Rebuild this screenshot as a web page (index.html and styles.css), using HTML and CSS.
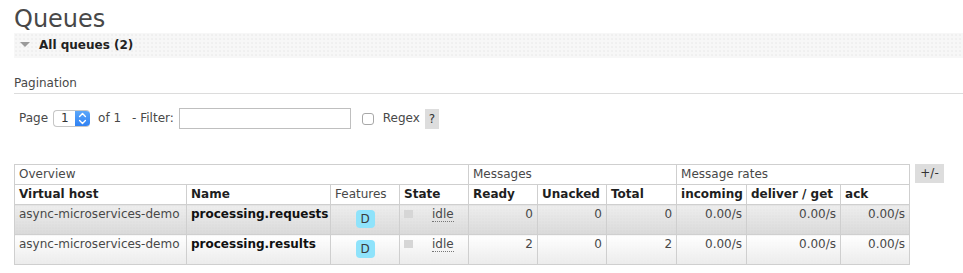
FILE: index.html
```html
<!DOCTYPE html>
<html>
<head>
<meta charset="utf-8">
<title>Queues</title>
<link rel="stylesheet" href="styles.css">
</head>
<body>
<h1 class="title">Queues</h1>
<div class="section">
  <h2 class="section-head"><span class="tri"></span>All queues (2)</h2>
  <div class="section-body">
    <h3 class="pag-title">Pagination</h3>
    <div class="pager">
      <span class="lbl page">Page</span>
      <span class="select"><span class="select-val">1</span><span class="stepper"><svg width="15" height="17" viewBox="0 0 15 17"><path d="M4.6 6.4 L7.5 3.6 L10.4 6.4" fill="none" stroke="#fff" stroke-width="1.4" stroke-linecap="round" stroke-linejoin="round"/><path d="M4.6 10.6 L7.5 13.4 L10.4 10.6" fill="none" stroke="#fff" stroke-width="1.4" stroke-linecap="round" stroke-linejoin="round"/></svg></span></span>
      <span class="lbl of">of 1</span>
      <span class="lbl filt">- Filter:</span>
      <input class="filter" type="text">
      <input class="check" type="checkbox">
      <span class="lbl regex">Regex</span>
      <span class="help">?</span>
    </div>
    <div class="table-wrap">
      <table class="list">
        <colgroup>
          <col class="c-vhost"><col class="c-name"><col class="c-feat"><col class="c-state">
          <col class="c-num"><col class="c-num"><col class="c-num2">
          <col class="c-in"><col class="c-deliver"><col class="c-ack">
        </colgroup>
        <thead>
          <tr class="group">
            <th colspan="4">Overview</th>
            <th colspan="3">Messages</th>
            <th colspan="3">Message rates</th>
          </tr>
          <tr class="cols">
            <th>Virtual host</th>
            <th>Name</th>
            <th class="plain">Features</th>
            <th>State</th>
            <th>Ready</th>
            <th>Unacked</th>
            <th>Total</th>
            <th>incoming</th>
            <th>deliver / get</th>
            <th>ack</th>
          </tr>
        </thead>
        <tbody>
          <tr class="alt1">
            <td>async-microservices-demo</td>
            <td class="qname">processing.requests</td>
            <td class="c"><span class="badge">D</span></td>
            <td><span class="state-sq"></span><abbr class="state">idle</abbr></td>
            <td class="r">0</td>
            <td class="r">0</td>
            <td class="r">0</td>
            <td class="r">0.00/s</td>
            <td class="r">0.00/s</td>
            <td class="r">0.00/s</td>
          </tr>
          <tr class="alt2">
            <td>async-microservices-demo</td>
            <td class="qname">processing.results</td>
            <td class="c"><span class="badge">D</span></td>
            <td><span class="state-sq"></span><abbr class="state">idle</abbr></td>
            <td class="r">2</td>
            <td class="r">0</td>
            <td class="r">2</td>
            <td class="r">0.00/s</td>
            <td class="r">0.00/s</td>
            <td class="r">0.00/s</td>
          </tr>
        </tbody>
      </table>
      <span class="plusminus">+/-</span>
    </div>
  </div>
</div>
</body>
</html>
```
FILE: styles.css
```css
html, body {
  margin: 0;
  padding: 0;
  background: #fff;
}
body {
  font-family: "DejaVu Sans", Verdana, sans-serif;
  font-size: 12px;
  line-height: 15px;
  color: #484848;
  padding-left: 14px;
}
.title {
  margin: 0;
  padding-top: 6px;
  font-size: 24px;
  line-height: 27px;
  font-weight: normal;
  color: #484848;
}
.section-head {
  margin: 0;
  height: 15px;
  padding: 5px 0 5px 6px;
  display: flex;
  align-items: center;
  font-size: 12px;
  line-height: 15px;
  font-weight: bold;
  color: #222;
  background-color: #f7f7f7;
  background-image: radial-gradient(circle, #ececec 0.6px, transparent 0.9px);
  background-size: 4px 4px;
}
.tri {
  width: 0;
  height: 0;
  border-left: 5px solid transparent;
  border-right: 5px solid transparent;
  border-top: 5px solid #9a9a9a;
  margin-right: 9px;
  margin-top: -2px;
}
.pag-title {
  margin: 18px 0 0;
  padding-bottom: 2px;
  font-size: 12px;
  line-height: 15px;
  font-weight: normal;
  color: #484848;
  border-bottom: 1px solid #dcdcdc;
}
.pager {
  margin-top: 14px;
  height: 21px;
  padding-left: 5px;
  display: flex;
  align-items: center;
}
.lbl {
  white-space: nowrap;
}
.page { margin-right: 5px; }
.select {
  display: flex;
  width: 37px;
  height: 17px;
  box-sizing: border-box;
  border: 1px solid #c6c6c6;
  border-right: none;
  border-radius: 4px;
  background: #fff;
  margin-right: 8px;
  overflow: hidden;
}
.select-val {
  flex: 1;
  padding-left: 7px;
  line-height: 15px;
  color: #333;
}
.stepper {
  width: 15px;
  height: 17px;
  margin-top: -1px;
  background: linear-gradient(#5da9fa, #2e7ff2);
  border-radius: 0 4px 4px 0;
  display: flex;
}
.of { margin-right: 11px; }
.filt { margin-right: 5px; }
.filter {
  width: 172px;
  height: 21px;
  box-sizing: border-box;
  border: 1px solid #bfbfbf;
  border-radius: 0;
  padding: 0 3px;
  margin: 0 11px 0 0;
  background: #fff;
  font: inherit;
}
.check {
  appearance: none;
  -webkit-appearance: none;
  width: 12px;
  height: 12px;
  box-sizing: border-box;
  border: 1px solid #a8a8a8;
  border-radius: 3px;
  background: #fff;
  margin: 1px 9px 0 0;
}
.regex { margin-right: 5px; }
.help {
  width: 14px;
  height: 20px;
  line-height: 20px;
  text-align: center;
  background: #ddd;
  color: #333;
}
.table-wrap {
  margin-top: 35px;
  display: flex;
  align-items: flex-start;
}
.list {
  border-collapse: collapse;
  table-layout: fixed;
  width: 896px;
}
.c-vhost { width: 172px; }
.c-name { width: 144px; }
.c-feat { width: 69px; }
.c-state { width: 69px; }
.c-num { width: 69px; }
.c-num2 { width: 70px; }
.c-in { width: 70px; }
.c-deliver { width: 94px; }
.c-ack { width: 69px; }
.list th,
.list td {
  border: 1px solid #cfcfcf;
  padding: 2px 4px;
  text-align: left;
  vertical-align: top;
  white-space: nowrap;
  overflow: hidden;
}
.list th {
  font-weight: bold;
  color: #1e1e1e;
  background: #fff;
}
.list tr.group th {
  font-weight: normal;
  color: #484848;
}
.list th.plain {
  font-weight: normal;
  color: #484848;
}
.list td {
  padding: 2px 4px 6px;
  color: #484848;
}
.list td.r { text-align: right; }
.list td.c { text-align: center; }
.list td.qname {
  font-weight: bold;
  color: #111;
}
.list tr.alt1 td {
  background-color: #e4e4e4;
  background-image:
    radial-gradient(circle, rgba(0,0,0,0.03) 0.7px, transparent 1px),
    linear-gradient(#eeeeee, #dadada);
  background-size: 3px 3px, 100% 100%;
}
.list tr.alt2 td {
  background-color: #f6f6f6;
  background-image:
    radial-gradient(circle, rgba(0,0,0,0.02) 0.7px, transparent 1px),
    linear-gradient(#ffffff, #ececec);
  background-size: 3px 3px, 100% 100%;
}
.badge {
  display: block;
  width: 19px;
  height: 18px;
  line-height: 18px;
  margin: 3px auto 0;
  border-radius: 4px;
  background: #8fe3fb;
  color: #3a3a3a;
  text-align: center;
}
.state-sq {
  display: inline-block;
  width: 9px;
  height: 8px;
  margin-right: 19px;
  background: #d6d6d6;
}
.state {
  text-decoration: none;
  border-bottom: 1px dotted #777;
  color: #484848;
}
.plusminus {
  margin-left: 5px;
  width: 29px;
  height: 19px;
  line-height: 19px;
  text-align: center;
  background: #ddd;
  color: #333;
}
```
